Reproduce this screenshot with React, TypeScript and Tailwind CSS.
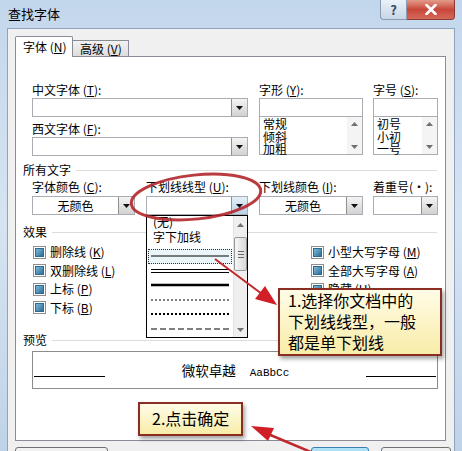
import React from 'react';

function Label({ text, k }: { text: string; k: string }) {
  return (
    <div className="h-[14px] leading-[14px] text-[12px] whitespace-nowrap text-black">
      {text} (<u>{k}</u>):
    </div>
  );
}

function DropBtn({ open }: { open?: boolean }) {
  return (
    <div
      className={
        'w-[16px] h-full border-l border-[#8e8f8f] flex items-center justify-center bg-gradient-to-b ' +
        (open ? 'from-[#e4f0f8] to-[#b9d2e6]' : 'from-[#f4f4f4] to-[#d2d2d2]')
      }
    >
      <svg width="7" height="4" viewBox="0 0 7 4">
        <polygon points="0,0 7,0 3.5,4" fill="#111" />
      </svg>
    </div>
  );
}

function Combo({ value, open }: { value?: string; open?: boolean }) {
  return (
    <div className="h-[19px] border border-[#a9acb2] bg-white flex">
      <div className="flex-1 text-center text-[12px] leading-[17px] text-black">{value}</div>
      <DropBtn open={open} />
    </div>
  );
}

function Tri({ up }: { up?: boolean }) {
  return (
    <svg width="7" height="4" viewBox="0 0 7 4">
      <polygon points={up ? '0,4 7,4 3.5,0' : '0,0 7,0 3.5,4'} fill="#707070" />
    </svg>
  );
}

function ListBox({ items }: { items: string[] }) {
  return (
    <div>
      <div className="mt-[1px] h-[19px] border border-[#a9acb2] bg-white" />
      <div className="h-[38px] border border-t-0 border-[#a9acb2] bg-white flex">
        <div className="flex-1 pl-[3px] pt-[1px] text-[12px] leading-[12.5px] text-black">
          {items.map((i) => (
            <div key={i}>{i}</div>
          ))}
        </div>
        <div className="w-[15px] bg-[#f4f4f4] flex flex-col items-center justify-between py-[5px]">
          <Tri up />
          <Tri />
        </div>
      </div>
    </div>
  );
}

function Check({ text, k }: { text: string; k: string }) {
  return (
    <div className="h-[18.5px] flex items-center">
      <div className="w-[13px] h-[13px] border border-[#8f8f8f] bg-white flex items-center justify-center">
        <div className="w-[9px] h-[9px] border border-[#2e6a90] bg-gradient-to-br from-[#7dbad8] to-[#2d6f98]" />
      </div>
      <span className="ml-[4px] text-[12px] leading-[14px] whitespace-nowrap">
        {text} (<u>{k}</u>)
      </span>
    </div>
  );
}

function Section({ title }: { title: string }) {
  return (
    <div className="h-[14px] flex items-center">
      <span className="text-[12px] leading-[14px]">{title}</span>
      <div className="flex-1 h-px bg-[#dcdcdc] ml-[5px] mr-[8px]" />
    </div>
  );
}

function LineRow({ children, selected }: { children: React.ReactNode; selected?: boolean }) {
  return (
    <div
      className={
        'h-[14.5px] mx-[1px] flex items-center px-[2px] ' +
        (selected ? 'border border-dotted border-[#333] bg-[#eaf5fa]' : 'border border-transparent')
      }
    >
      <svg width="78" height="6" viewBox="0 0 78 6">
        {children}
      </svg>
    </div>
  );
}

export default function App() {
  return (
    <div className="relative w-[462px] h-[451px] overflow-hidden bg-gradient-to-b from-[#c3d7ec] via-[#d6e4f2] to-[#bfd3e8] font-[family-name:'Noto_Sans_CJK_SC',sans-serif] text-black">
      {/* title bar */}
      <div className="h-[28px] flex items-start justify-between">
        <div className="pl-[8px] pt-[6px] text-[13px] leading-[16px]">查找字体</div>
        <div className="flex mr-[7px]">
          <div className="w-[27px] h-[20px] rounded-bl-[4px] border border-[#8a9cb3] border-t-0 bg-gradient-to-b from-[#eaf1f8] to-[#c7d6e6] flex items-center justify-center text-[13px] font-bold text-[#3b4a5e] leading-none">
            ?
          </div>
          <div className="w-[48px] h-[20px] rounded-br-[4px] border border-[#8b3a34] border-t-0 border-l-0 bg-gradient-to-b from-[#e29a8a] via-[#c8463a] to-[#d4695a] flex items-center justify-center">
            <svg width="12" height="11" viewBox="0 0 12 11">
              <path d="M1.5 1 L10.5 10 M10.5 1 L1.5 10" stroke="#fff" strokeWidth="2.6" strokeLinecap="round" />
            </svg>
          </div>
        </div>
      </div>

      {/* client area */}
      <div className="mx-[7px] h-[430px] bg-[#f0f0f0] border border-b-0 border-[#8fa3bd] pl-[7px] pt-[7px]">
        <div className="h-[20px] flex items-start">
          <div className="relative z-10 w-[58px] h-[21px] bg-white border border-b-0 border-[#898c95] rounded-t-[2px] pl-[7px] text-[12px] leading-[20px]">
            字体 (<u>N</u>)
          </div>
          <div className="mt-[4px] w-[56px] h-[16px] border border-l-0 border-b-0 border-[#898c95] bg-gradient-to-b from-[#f2f2f2] to-[#dedede] pl-[7px] text-[12px] leading-[16px]">
            高级 (<u>V</u>)
          </div>
        </div>

        <div className="w-[431px] h-[385px] border border-[#898c95] bg-white pl-[7px]">
          {/* row 1 */}
          <div className="mt-[26px] ml-[9px] flex">
            <div className="w-[216px]">
              <Label text="中文字体" k="T" />
              <div className="mt-[1px]">
                <Combo />
              </div>
              <div className="mt-[5px]">
                <Label text="西文字体" k="F" />
              </div>
              <div className="mt-[1px]">
                <Combo />
              </div>
            </div>
            <div className="ml-[11px] w-[104px]">
              <Label text="字形" k="Y" />
              <ListBox items={['常规', '倾斜', '加粗']} />
            </div>
            <div className="ml-[10px] w-[65px]">
              <Label text="字号" k="S" />
              <ListBox items={['初号', '小初', '一号']} />
            </div>
          </div>

          <div className="mt-[7px]">
            <Section title="所有文字" />
          </div>

          {/* row 3 */}
          <div className="mt-[3px] ml-[9px] flex">
            <div className="w-[103px]">
              <Label text="字体颜色" k="C" />
              <div className="mt-[2px]">
                <Combo value="无颜色" />
              </div>
            </div>
            <div className="ml-[11px] w-[102px]">
              <Label text="下划线线型" k="U" />
              <div className="mt-[2px]">
                <Combo open />
              </div>
            </div>
            <div className="ml-[11px] w-[104px]">
              <Label text="下划线颜色" k="I" />
              <div className="mt-[2px]">
                <Combo value="无颜色" />
              </div>
            </div>
            <div className="ml-[10px] w-[65px]">
              <div className="h-[14px] leading-[14px] text-[12px] whitespace-nowrap">着重号(·):</div>
              <div className="mt-[2px]">
                <Combo />
              </div>
            </div>
          </div>

          <div className="mt-[10px]">
            <Section title="效果" />
          </div>

          <div className="mt-[4px] ml-[10px] grid grid-cols-[278px_1fr]">
            <div>
              <Check text="删除线" k="K" />
              <Check text="双删除线" k="L" />
              <Check text="上标" k="P" />
              <Check text="下标" k="B" />
            </div>
            <div>
              <Check text="小型大写字母" k="M" />
              <Check text="全部大写字母" k="A" />
              <Check text="隐藏" k="H" />
            </div>
          </div>

          <div className="mt-[16px]">
            <Section title="预览" />
          </div>

          <div className="mt-[4px] ml-[9px] w-[406px] h-[38px] border border-[#8c8c8c] flex justify-between items-end pb-[11px] px-[1px]">
            <div className="w-[71px] h-px bg-black" />
            <div className="flex items-baseline self-center mt-[15px]">
              <span className="text-[13.5px] leading-[16px]">微软卓越</span>
              <span className="ml-[14px] text-[11px] font-[family-name:'Liberation_Mono',monospace]">AaBbCc</span>
            </div>
            <div className="w-[70px] h-px bg-black" />
          </div>
        </div>

        {/* bottom buttons */}
        <div className="mt-[6px] flex pr-[3px]">
          <div className="w-[93px] h-[23px] rounded-[3px] border border-[#707070] bg-gradient-to-b from-[#f2f2f2] to-[#dcdcdc]" />
          <div className="ml-auto w-[58px] h-[23px] rounded-[3px] border border-[#3c7fb1] bg-gradient-to-b from-[#b5e3f7] to-[#6ec3e8]" />
          <div className="ml-[12px] w-[70px] h-[23px] rounded-[3px] border border-[#707070] bg-gradient-to-b from-[#f2f2f2] to-[#dcdcdc]" />
        </div>
      </div>

      {/* opened underline dropdown */}
      <div className="absolute z-20 left-[146px] top-[215px] w-[102px] h-[123px] border border-black bg-white flex">
        <div className="flex-1 flex flex-col">
          <div className="h-[12px] leading-[12px] text-[12px] pl-[6px]">(无)</div>
          <div className="h-[17px] leading-[17px] text-[12px] pl-[6px]">字下加线</div>
          <div className="mt-[4px]">
            <LineRow selected>
              <line x1="0" y1="3" x2="78" y2="3" stroke="#000" strokeWidth="1" />
            </LineRow>
            <LineRow>
              <line x1="0" y1="1.5" x2="78" y2="1.5" stroke="#000" strokeWidth="1" />
              <line x1="0" y1="4.5" x2="78" y2="4.5" stroke="#000" strokeWidth="1" />
            </LineRow>
            <LineRow>
              <line x1="0" y1="3" x2="78" y2="3" stroke="#000" strokeWidth="2.5" />
            </LineRow>
            <LineRow>
              <line x1="0" y1="3" x2="78" y2="3" stroke="#000" strokeWidth="1" strokeDasharray="2 2" />
            </LineRow>
            <LineRow>
              <line x1="0" y1="3" x2="78" y2="3" stroke="#000" strokeWidth="2" strokeDasharray="2 2" />
            </LineRow>
            <LineRow>
              <line x1="0" y1="3" x2="78" y2="3" stroke="#000" strokeWidth="1" strokeDasharray="6 3" />
            </LineRow>
          </div>
        </div>
        <div className="w-[15px] bg-[#efefef] border-l border-[#e2e2e2] flex flex-col items-center">
          <div className="h-[18px] flex items-center">
            <Tri up />
          </div>
          <div className="mt-[3px] w-[13px] h-[34px] rounded-[2px] border border-[#979797] bg-gradient-to-r from-[#f6f6f6] to-[#d9d9d9] flex flex-col items-center justify-center gap-[2px]">
            <div className="w-[6px] h-px bg-[#666]" />
            <div className="w-[6px] h-px bg-[#666]" />
            <div className="w-[6px] h-px bg-[#666]" />
          </div>
          <div className="flex-1" />
          <div className="h-[14px] flex items-center">
            <Tri />
          </div>
        </div>
      </div>

      {/* note 1 */}
      <div className="absolute z-30 left-[278px] top-[288px] w-[164px] h-[68px] border-2 border-[#8a2d22] bg-gradient-to-b from-[#fffce6] to-[#f8eca8] shadow-[2px_3px_4px_rgba(0,0,0,0.35)] pl-[8px] text-[16px] leading-[21px]">
        1.选择你文档中的
        <br />
        下划线线型，一般
        <br />
        都是单下划线
      </div>

      {/* note 2 */}
      <div className="absolute z-30 left-[138px] top-[402px] w-[105px] h-[34px] border-2 border-[#8a2d22] bg-gradient-to-b from-[#fffce6] to-[#f8eca8] shadow-[2px_3px_4px_rgba(0,0,0,0.35)] pl-[12px] text-[16px] leading-[29px]">
        2.点击确定
      </div>

      {/* red marks */}
      <svg className="absolute z-40 left-0 top-0 pointer-events-none" width="462" height="451" viewBox="0 0 462 451">
        <ellipse cx="196" cy="197" rx="65" ry="22" fill="none" stroke="#b3262b" strokeOpacity="0.9" strokeWidth="3" transform="rotate(-6 196 197)" />
        <line x1="215" y1="259" x2="262" y2="294" stroke="#c0282d" strokeWidth="2" />
        <polygon points="277,305 255,299 265,286" fill="#d01f26" />
        <line x1="268" y1="434" x2="318" y2="455" stroke="#c0282d" strokeWidth="2.5" />
        <polygon points="251,426 268,441 274,428" fill="#d01f26" />
      </svg>
    </div>
  );
}
